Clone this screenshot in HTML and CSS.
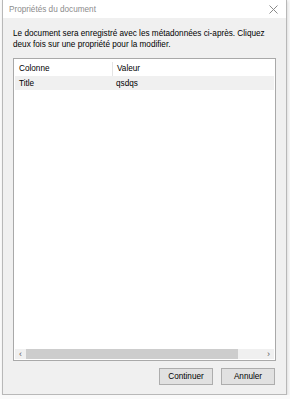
FILE: index.html
```html
<!DOCTYPE html>
<html lang="fr">
<head>
    <meta charset="UTF-8">
    <title>Propriétés du document</title>
    <link rel="stylesheet" href="styles.css">
</head>
<body>
    <div class="dialog">
        <div class="titlebar">
            <span class="title">Propriétés du document</span>
            <svg class="close" width="9" height="9" viewBox="0 0 9 9"><path d="M0.5 0.5L8.5 8.5M8.5 0.5L0.5 8.5" stroke="#8a8a8a" stroke-width="1"/></svg>
        </div>
        <div class="content">
            <p class="info">Le document sera enregistré avec les métadonnées ci-après. Cliquez deux fois sur une propriété pour la modifier.</p>
            <div class="listbox">
                <div class="row header">
                    <div class="col first">Colonne</div>
                    <div class="col">Valeur</div>
                </div>
                <div class="row selected">
                    <div class="col first">Title</div>
                    <div class="col">qsdqs</div>
                </div>
                <div class="spacer"></div>
                <div class="hscroll">
                    <span class="arrow">&lsaquo;</span>
                    <div class="track"><div class="thumb"></div></div>
                    <span class="arrow">&rsaquo;</span>
                </div>
            </div>
            <div class="buttons">
                <button>Continuer</button>
                <button>Annuler</button>
            </div>
        </div>
    </div>
</body>
</html>
```

FILE: styles.css
```css
body {
    margin: 0;
    padding: 0;
    background-color: #fafafa;
    font-family: "Liberation Sans", Arial, sans-serif;
    font-size: 8.2px;
    color: #000;
}
.dialog {
    width: 283px;
    height: 394px;
    margin-left: 2px;
    border: 1px solid #b8b8b8;
    border-top: none;
    background-color: #f0f0f0;
    display: flex;
    flex-direction: column;
    box-shadow: 1px 1px 3px rgba(0, 0, 0, 0.12);
}
.titlebar {
    height: 18px;
    background-color: #fff;
    display: flex;
    align-items: center;
    justify-content: space-between;
    padding: 0 8px 0 6px;
}
.title {
    color: #8c8c8c;
    font-size: 8.2px;
}
.content {
    flex: 1;
    display: flex;
    flex-direction: column;
    padding: 0 10px 8px 10px;
}
.info {
    margin: 10px 0 0 0;
    line-height: 11px;
}
.listbox {
    margin-top: 8px;
    height: 299px;
    border: 1px solid #a9a9a9;
    background-color: #fff;
    display: flex;
    flex-direction: column;
    padding: 1px;
}
.row {
    display: flex;
    height: 14px;
    align-items: center;
}
.col {
    padding-left: 4px;
}
.col.first {
    width: 93px;
}
.header .col.first {
    border-right: 1px solid #e4e4e4;
    height: 14px;
    line-height: 14px;
}
.header {
    height: 15px;
    margin-top: 1px;
}
.selected {
    background-color: #f0f0f0;
}
.spacer {
    flex: 1;
}
.hscroll {
    height: 10px;
    display: flex;
    align-items: center;
    background-color: #f0f0f0;
}
.arrow {
    width: 11px;
    text-align: center;
    color: #606060;
    font-size: 9px;
    line-height: 10px;
}
.track {
    flex: 1;
    height: 10px;
}
.thumb {
    width: 212px;
    height: 10px;
    background-color: #cdcdcd;
}
.buttons {
    display: flex;
    justify-content: flex-end;
    gap: 8px;
    margin-top: 7px;
    padding-right: 1px;
}
button {
    width: 54px;
    height: 17px;
    font-family: "Liberation Sans", Arial, sans-serif;
    font-size: 8.2px;
    background-color: #e1e1e1;
    border: 1px solid #adadad;
    padding: 0;
    color: #000;
}
```
